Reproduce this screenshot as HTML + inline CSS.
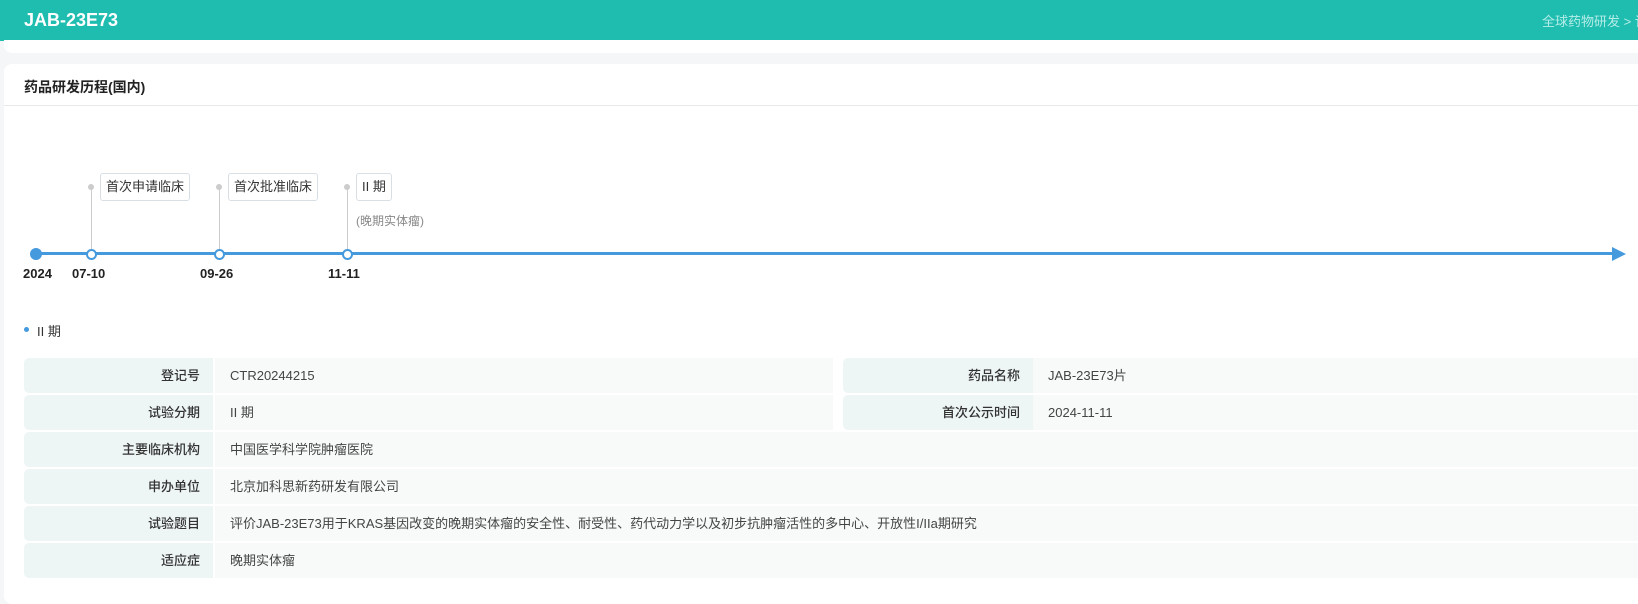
<!DOCTYPE html>
<html><head><meta charset="utf-8"><style>
*{margin:0;padding:0;box-sizing:border-box}
body{width:1638px;height:596px;background:#f5f6f8;font-family:"Liberation Sans","Noto Sans CJK SC",sans-serif;position:relative;overflow:hidden;color:#333}
.a{position:absolute}
.hdr{left:0;top:0;width:1638px;height:41px;background:#1fbcb0}
.tag{height:28px;border:1px solid #d8e0e6;border-radius:3px;background:#fff;font-size:13px;line-height:26px;padding:0 5px;color:#333}
.vl{width:1px;background:#ccc}
.sd{width:6px;height:6px;border-radius:3px;background:#ccc}
.nd{width:11px;height:11px;border-radius:6px;border:2px solid #4599dd;background:#fff}
.dt{font-size:13px;font-weight:bold;color:#222}
.lb{background:#eef5f5;border-radius:5px 0 0 5px;font-size:13px;text-align:right;padding-right:13px;line-height:35px;height:35px;color:#333;font-weight:500}
.vv{background:#f8fafa;font-size:13px;padding-left:15px;line-height:35px;height:35px;color:#444}
</style></head><body>
<div class="a hdr"></div>
<div class="a" style="left:24px;top:10px;color:#fff;font-size:18px;font-weight:bold">JAB-23E73</div>
<div class="a" style="left:1542px;top:11px;color:#b5ede7;font-size:13px;white-space:nowrap">全球药物研发 &gt; 详</div>
<div class="a" style="left:4px;top:40px;width:1640px;height:13px;background:#fff;border-radius:0 0 8px 8px"></div>
<div class="a" style="left:4px;top:64px;width:1640px;height:540px;background:#fff;border-radius:8px"></div>
<div class="a" style="left:24px;top:77px;font-size:14px;font-weight:bold;color:#222">药品研发历程(国内)</div>
<div class="a" style="left:4px;top:105px;width:1640px;height:1px;background:#e6e8ea"></div>

<div class="a" style="left:36px;top:252px;width:1578px;height:3px;background:#4599dd"></div>
<svg class="a" style="left:1610px;top:246px" width="18" height="16"><polygon points="2,1 16,8 2,15" fill="#4599dd"/></svg>
<div class="a" style="left:30px;top:248px;width:12px;height:12px;border-radius:6px;background:#4599dd"></div>

<div class="a sd" style="left:88px;top:184px"></div><div class="a vl" style="left:91px;top:187px;height:64px"></div>
<div class="a nd" style="left:86px;top:249px"></div>
<div class="a tag" style="left:100px;top:173px">首次申请临床</div>
<div class="a sd" style="left:216px;top:184px"></div><div class="a vl" style="left:219px;top:187px;height:64px"></div>
<div class="a nd" style="left:214px;top:249px"></div>
<div class="a tag" style="left:228px;top:173px">首次批准临床</div>
<div class="a sd" style="left:344px;top:184px"></div><div class="a vl" style="left:347px;top:187px;height:64px"></div>
<div class="a nd" style="left:342px;top:249px"></div>
<div class="a tag" style="left:356px;top:173px">II 期</div>
<div class="a" style="left:356px;top:212px;font-size:12px;color:#888">(晚期实体瘤)</div>

<div class="a dt" style="left:23px;top:266px">2024</div>
<div class="a dt" style="left:72px;top:266px">07-10</div>
<div class="a dt" style="left:200px;top:266px">09-26</div>
<div class="a dt" style="left:328px;top:266px">11-11</div>

<div class="a" style="left:24px;top:327px;width:5px;height:5px;border-radius:3px;background:#4599dd"></div>
<div class="a" style="left:37px;top:321px;font-size:13px;color:#333">II 期</div>

<div class="a lb" style="left:24px;top:358px;width:189px">登记号</div>
<div class="a vv" style="left:215px;top:358px;width:618px">CTR20244215</div>
<div class="a lb" style="left:843px;top:358px;width:190px">药品名称</div>
<div class="a vv" style="left:1033px;top:358px;width:620px">JAB-23E73片</div>
<div class="a lb" style="left:24px;top:395px;width:189px">试验分期</div>
<div class="a vv" style="left:215px;top:395px;width:618px">II 期</div>
<div class="a lb" style="left:843px;top:395px;width:190px">首次公示时间</div>
<div class="a vv" style="left:1033px;top:395px;width:620px">2024-11-11</div>
<div class="a lb" style="left:24px;top:432px;width:189px">主要临床机构</div>
<div class="a vv" style="left:215px;top:432px;width:1440px">中国医学科学院肿瘤医院</div>
<div class="a lb" style="left:24px;top:469px;width:189px">申办单位</div>
<div class="a vv" style="left:215px;top:469px;width:1440px">北京加科思新药研发有限公司</div>
<div class="a lb" style="left:24px;top:506px;width:189px">试验题目</div>
<div class="a vv" style="left:215px;top:506px;width:1440px">评价JAB-23E73用于KRAS基因改变的晚期实体瘤的安全性、耐受性、药代动力学以及初步抗肿瘤活性的多中心、开放性I/IIa期研究</div>
<div class="a lb" style="left:24px;top:543px;width:189px">适应症</div>
<div class="a vv" style="left:215px;top:543px;width:1440px">晚期实体瘤</div>
</body></html>
